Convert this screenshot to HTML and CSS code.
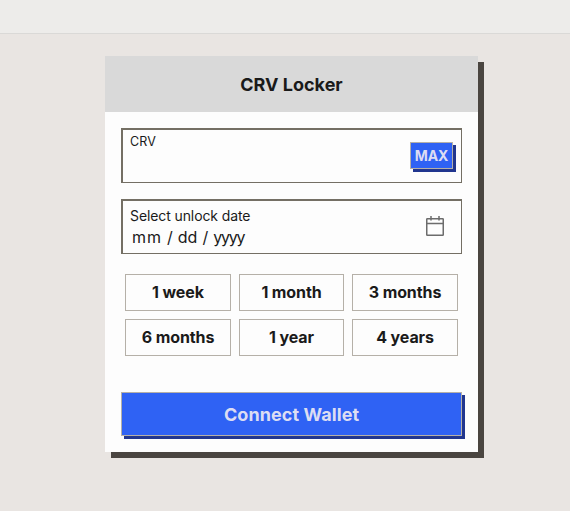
FILE: index.html
```html
<!DOCTYPE html>
<html lang="en">
<head>
<meta charset="utf-8">
<title>CRV Locker</title>
<link rel="stylesheet" href="styles.css">
</head>
<body>
<div class="topbar"></div>
<main class="card">
  <header class="card-header"><h1 class="title">CRV Locker</h1></header>
  <form class="card-body">
    <div class="field amount">
      <span class="amount-label">CRV</span>
      <button type="button" class="max"><span>MAX</span></button>
    </div>
    <div class="field date">
      <div class="date-text">
        <span class="date-label">Select unlock date</span>
        <span class="date-value"><span class="month">mm</span><span>/</span><span>dd</span><span>/</span><span class="year">yyyy</span></span>
      </div>
      <svg class="calendar" width="20" height="22" viewBox="0 0 20 22" fill="none" stroke="#6c6c6c" stroke-width="1.5">
        <rect x="1.75" y="3.75" width="16.5" height="16.5" rx=".6"/>
        <path d="M1.5 8.5h17M6 1v4.5M14 1v4.5"/>
      </svg>
    </div>
    <div class="durations">
      <button type="button" class="duration"><span>1 week</span></button>
      <button type="button" class="duration"><span>1 month</span></button>
      <button type="button" class="duration"><span>3 months</span></button>
      <button type="button" class="duration"><span>6 months</span></button>
      <button type="button" class="duration"><span>1 year</span></button>
      <button type="button" class="duration"><span>4 years</span></button>
    </div>
    <button type="button" class="connect"><span>Connect Wallet</span></button>
  </form>
</main>
</body>
</html>
```
FILE: styles.css
```css
* { box-sizing: border-box; }
body {
  margin: 0;
  height: 511px;
  overflow: hidden;
  background: #e9e5e2;
  color: #1a1a1a;
  font-family: Inter, "Liberation Sans", sans-serif;
}
button {
  font: inherit;
  color: inherit;
  padding: 0;
  border-radius: 0;
  display: flex;
  align-items: center;
  justify-content: center;
  white-space: pre;
}
.topbar { height: 34px; background: #edecea; border-bottom: 1px solid #dad9d7; }
.card {
  width: 373px;
  height: 396px;
  margin: 22px 0 0 105px;
  background: #fdfdfd;
  box-shadow: 6px 6px 0 #4a4540;
}
.card-header {
  height: 56px;
  padding-top: 2px;
  background: #d9d9d9;
  display: flex;
  align-items: center;
  justify-content: center;
}
.title { margin: 0; font-size: 18px; line-height: 24px; font-weight: 700; letter-spacing: 0; }
.card-body { padding: 16px; display: flex; flex-direction: column; }
.field {
  height: 55px;
  border: solid #746f64;
  border-width: 2px 1px 1px 2px;
  display: flex;
  justify-content: space-between;
}
.amount { padding: 0 8px 0 7px; }
.amount-label { font-size: 12.5px; line-height: 16px; padding-top: 4px; letter-spacing: .2px; }
.max {
  width: 43px;
  height: 27px;
  margin-top: 12px;
  background: #2f62f4;
  border: 1px solid #b5b0a8;
  box-shadow: 3px 3px 0 #21368f;
  color: #dcddf3;
  font-size: 14px;
  font-weight: 700;
  letter-spacing: -.1px;
}
.max span { padding-bottom: 1px; }
.date { margin-top: 16px; padding: 0 16px 0 7px; }
.date-text { display: flex; flex-direction: column; padding-top: 6px; }
.date-label { font-size: 14px; line-height: 18px; letter-spacing: -.1px; }
.date-value { display: flex; gap: 5px; font-size: 16px; line-height: 22px; padding: 1px 0 0 2px; }
.month { letter-spacing: 1px; }
.year { letter-spacing: -1.2px; }
.calendar { margin-top: 14px; }
.durations {
  display: grid;
  grid-template-columns: 106px 105px 106px;
  grid-auto-rows: 37px;
  gap: 8px;
  margin: 20px 4px 0;
}
.duration {
  background: transparent;
  border: 1px solid #b5b0a8;
  font-size: 16px;
  font-weight: 700;
  letter-spacing: -.1px;
}
.duration span { padding-bottom: 1px; }
.connect {
  height: 44px;
  margin-top: 36px;
  background: #2f62f4;
  border: 1px solid #b5b0a8;
  box-shadow: 3px 3px 0 #21368f;
  color: #dcddf3;
  font-size: 18px;
  font-weight: 700;
  letter-spacing: .08px;
}
```
